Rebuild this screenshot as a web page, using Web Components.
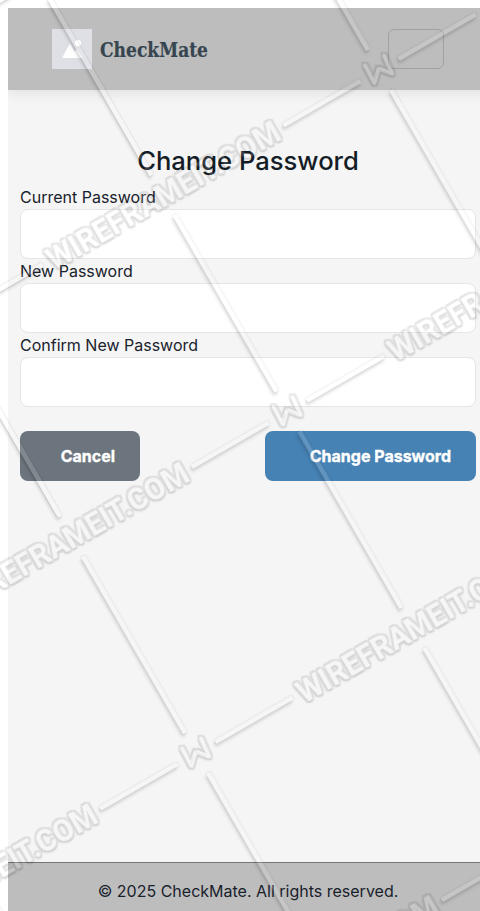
<!DOCTYPE html>
<html lang="en">
<head>
<meta charset="utf-8">
<title>CheckMate</title>
<style>
html{background:#fff;overflow:hidden}
body{margin:8px 0 0 8px;width:480px;height:903px;overflow:visible;font:16px/24px Inter,sans-serif;color:#19222c}
</style>
</head>
<body>
<check-page></check-page>
<script>
const define = (name, html, setup) => customElements.define(name, class extends HTMLElement {
  constructor() {
    super();
    this.attachShadow({mode: 'open'}).innerHTML = html;
  }
  connectedCallback() { if (setup) setup(this, this.shadowRoot); }
});

define('site-header', `
<style>
:host{display:flex;align-items:center;justify-content:space-between;height:82px;box-sizing:border-box;padding:0 44px;background:#bdbdbd;box-shadow:0 4px 12px rgba(0,0,0,.08)}
.brand{display:flex;align-items:center;gap:8px}
svg{display:block}
.toggle{width:56px;height:40px;box-sizing:border-box;border:1px solid #a1a1a1;border-radius:6px;background:none;padding:0}
</style>
<div class="brand">
<svg width="40" height="40" viewBox="0 0 40 40"><rect width="40" height="40" fill="#dfe0e6"/><path d="M10 29 17.8 14.8 22.5 22.5 25 20.5 30.3 29Z" fill="#fff"/><circle cx="26" cy="14" r="3.1" fill="#fff"/></svg>
<svg width="110" height="40"><text x="0" y="27.5" font-family="'Roboto Slab','DejaVu Serif',serif" font-size="20" font-weight="700" fill="#36454f" stroke="#36454f" stroke-width=".2" textLength="108" lengthAdjust="spacingAndGlyphs">CheckMate</text></svg>
</div>
<button class="toggle" aria-label="Menu"></button>`);

define('password-field', `
<style>
:host{display:block}
label{display:block;height:24px;line-height:24px}
input{display:block;width:100%;height:50px;box-sizing:border-box;border:1px solid #e5e5e5;border-radius:8px;background:#fff;padding:0 16px;outline:0}
</style>
<label><slot></slot></label><input type="password">`);

define('action-button', `
<style>
:host{display:block}
button{display:flex;align-items:center;width:100%;height:50px;border:0;border-radius:8px;padding:0 25px 1px 0;justify-content:flex-end;background:var(--fill);color:#fff;font:700 16px/24px Inter,sans-serif;-webkit-text-stroke:.35px #fff;white-space:nowrap}
</style>
<button><slot></slot></button>`);

define('site-footer', `
<style>:host{display:block;height:58px;box-sizing:border-box;border-top:1px solid #757575;background:#bdbdbd;padding-top:16px;text-align:center}</style>
<slot></slot>`);

define('brand-watermark', `
<style>:host{position:fixed;inset:0;pointer-events:none}svg{display:block}</style>
<svg width="480" height="911" viewBox="0 0 480 911">
<defs>
<filter id="emboss" filterUnits="userSpaceOnUse" x="-20" y="-20" width="520" height="951" color-interpolation-filters="sRGB">
<feMorphology in="SourceAlpha" operator="dilate" radius="1" result="wide"/>
<feFlood flood-color="#000" flood-opacity=".05"/><feComposite in2="wide" operator="in"/><feComposite in2="SourceAlpha" operator="out" result="edge"/>
<feOffset in="SourceAlpha" dx="-1.5" dy="3"/><feGaussianBlur stdDeviation="1.5" result="soft"/>
<feFlood flood-color="#000" flood-opacity=".13"/><feComposite in2="soft" operator="in"/><feComposite in2="SourceAlpha" operator="out" result="shade"/>
<feFlood flood-color="#fff" flood-opacity=".15"/><feComposite in2="SourceAlpha" operator="in" result="body"/>
<feMerge><feMergeNode in="shade"/><feMergeNode in="edge"/><feMergeNode in="body"/></feMerge>
</filter>
<filter id="raised" filterUnits="userSpaceOnUse" x="-20" y="-20" width="520" height="951" color-interpolation-filters="sRGB">
<feMorphology in="SourceAlpha" operator="dilate" radius="2"/><feGaussianBlur stdDeviation=".5" result="wide"/>
<feFlood flood-color="#000" flood-opacity=".09"/><feComposite in2="wide" operator="in"/><feComposite in2="SourceAlpha" operator="out" result="edge"/>
<feOffset in="SourceAlpha" dx="-.5" dy="2.5"/><feGaussianBlur stdDeviation="1.2" result="soft"/>
<feFlood flood-color="#000" flood-opacity=".05"/><feComposite in2="soft" operator="in"/><feComposite in2="SourceAlpha" operator="out" result="shade"/>
<feFlood flood-color="#fff" flood-opacity=".15"/><feComposite in2="SourceAlpha" operator="in" result="body"/>
<feMerge><feMergeNode in="shade"/><feMergeNode in="edge"/><feMergeNode in="body"/></feMerge>
</filter>
</defs>
<g filter="url(#emboss)"><g id="lines" transform="translate(288 411.5) rotate(-30)"></g></g>
<g filter="url(#raised)"><g id="words" transform="translate(288 411.5) rotate(-30)"></g></g>
<g id="folds" transform="translate(288 411.5) rotate(-30)"></g>
</svg>`, (el, root) => {
  let lines = '', words = '', folds = '';
  const near = (x, y, m) => {
    const sx = 288 + x * .866 + y * .5, sy = 411.5 - x * .5 + y * .866;
    return sx > -m && sx < 480 + m && sy > -m && sy < 911 + m;
  };
  for (let j = -5; j <= 5; j++) for (let i = -5; i <= 5; i++) {
    if ((i + j) % 2) continue;
    const x = i * 250, y = j * 250;
    if (near(x, y, 260)) lines += `<path transform="translate(${x} ${y})" d="M22 0H111M-22 0H-111M0 23V227M0-23V-227" stroke="#000" stroke-width="4.6"/>`;
    if (near(x, y, 25)) {
      const at = `transform="translate(${x} ${y}) rotate(30)" fill="none" stroke-linecap="round" stroke-linejoin="round"`;
      words += `<path ${at} d="M-14.5-4.5-5 13-1-1.5 12.5 3.5 4.5-14.5" stroke="#000" stroke-width="3.6"/>`;
      folds += `<path ${at} d="M-7.5 6-2.5-3.5 2.5-4 10.5 0M-2.5-4 .5 0 9.5 3M-5.5 11-2.5 3" stroke="#000" stroke-opacity=".08" stroke-width=".9"/>`;
    }
    if (near(x + 250, y, 110)) words += `<text x="${x + 118}" y="${y + 11}" textLength="264" lengthAdjust="spacingAndGlyphs" font-family="Roboto,sans-serif" font-size="31.5" font-weight="700">WIREFRAMEIT.COM</text>`;
  }
  root.getElementById('lines').innerHTML = lines;
  root.getElementById('words').innerHTML = words;
  root.getElementById('folds').innerHTML = folds;
});

define('check-page', `
<style>
:host{display:flex;flex-direction:column;height:912px;background:#f5f5f5}
site-header{position:relative}
main{flex:1;padding:56px 12px 0}
h1{margin:0 0 9px;font:500 25.6px/30px Inter,sans-serif;text-align:center;color:#141d26}
.actions{display:flex;justify-content:space-between;margin-top:24px}
.cancel{width:120px;--fill:#6c757d}
.change{width:211px;--fill:#4682b4}
</style>
<site-header></site-header>
<main>
<h1>Change Password</h1>
<password-field>Current Password</password-field>
<password-field>New Password</password-field>
<password-field>Confirm New Password</password-field>
<div class="actions"><action-button class="cancel">Cancel</action-button><action-button class="change">Change Password</action-button></div>
</main>
<site-footer>© 2025 CheckMate. All rights reserved.</site-footer>
<brand-watermark></brand-watermark>`);
</script>
</body>
</html>
